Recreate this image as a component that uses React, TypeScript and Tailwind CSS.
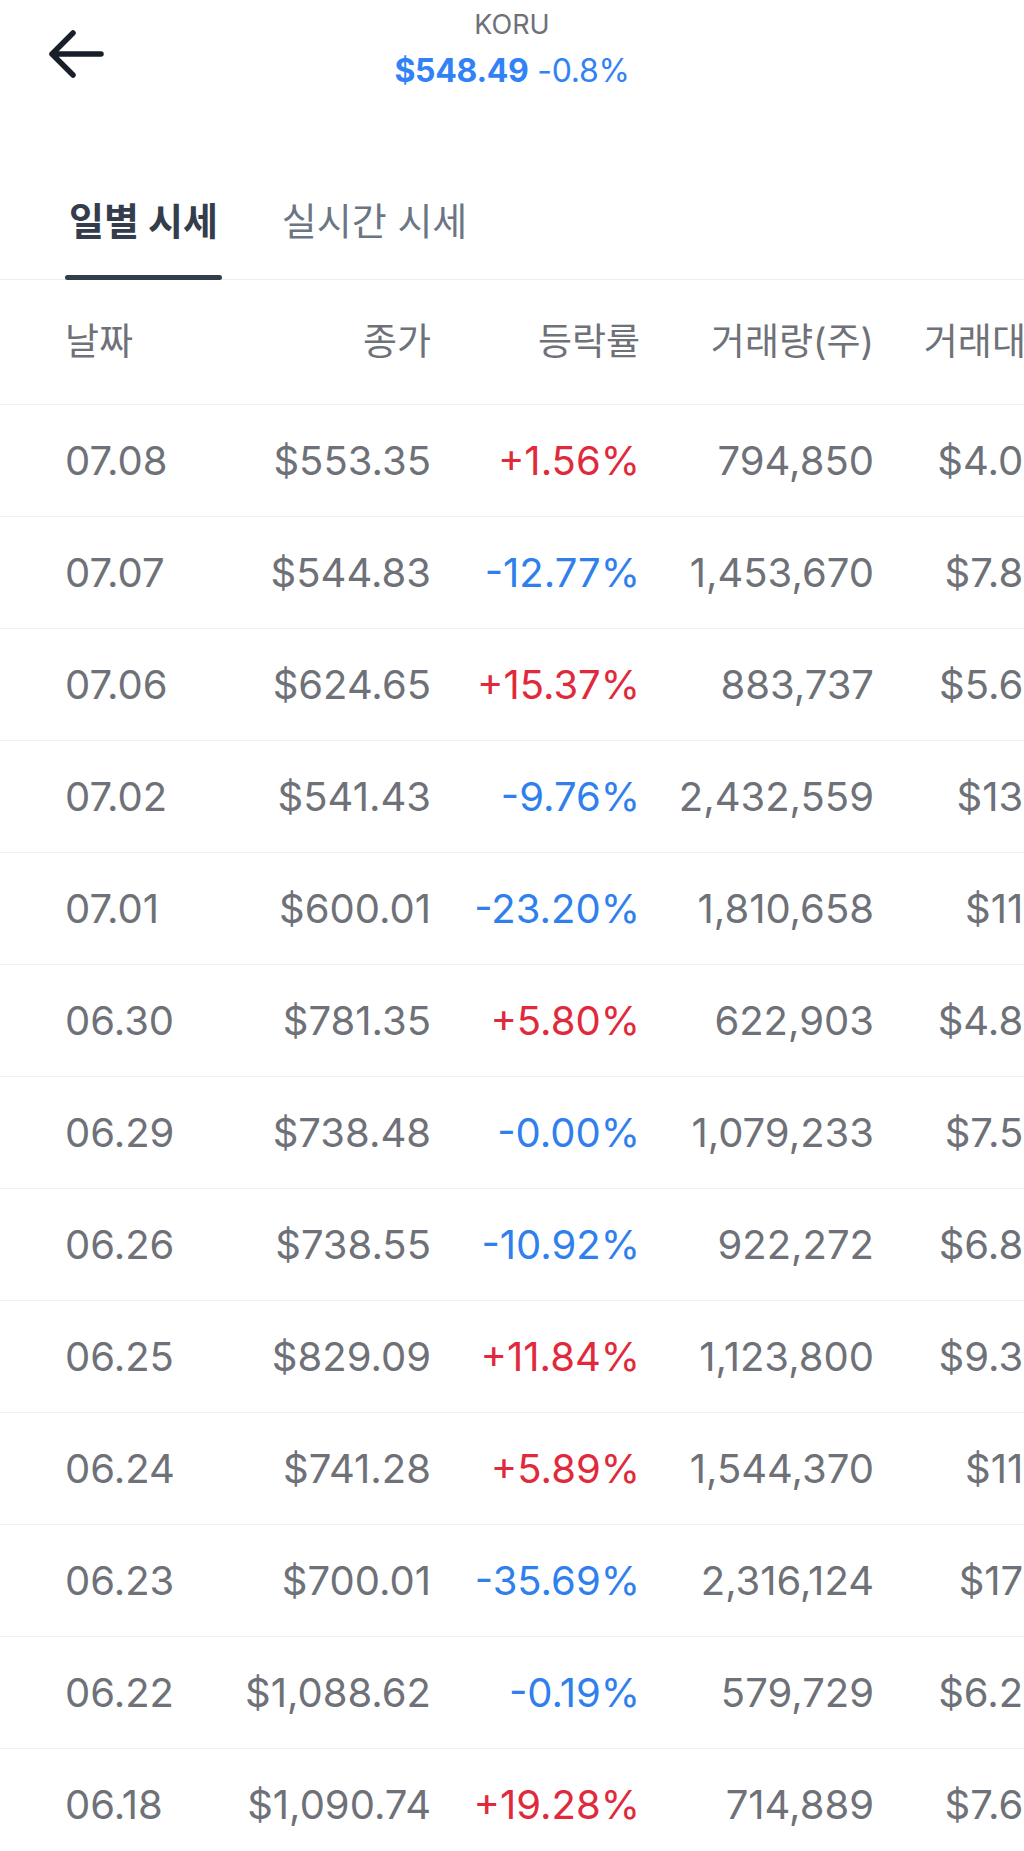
import { useState } from 'react';

type DailyPrice = {
  date: string;
  close: string;
  change: string;
  volume: string;
  amount: string;
};

const dailyPrices: DailyPrice[] = [
  { date: '07.08', close: '$553.35', change: '+1.56%', volume: '794,850', amount: '$4.0억' },
  { date: '07.07', close: '$544.83', change: '-12.77%', volume: '1,453,670', amount: '$7.8억' },
  { date: '07.06', close: '$624.65', change: '+15.37%', volume: '883,737', amount: '$5.6억' },
  { date: '07.02', close: '$541.43', change: '-9.76%', volume: '2,432,559', amount: '$13억' },
  { date: '07.01', close: '$600.01', change: '-23.20%', volume: '1,810,658', amount: '$11억' },
  { date: '06.30', close: '$781.35', change: '+5.80%', volume: '622,903', amount: '$4.8억' },
  { date: '06.29', close: '$738.48', change: '-0.00%', volume: '1,079,233', amount: '$7.5억' },
  { date: '06.26', close: '$738.55', change: '-10.92%', volume: '922,272', amount: '$6.8억' },
  { date: '06.25', close: '$829.09', change: '+11.84%', volume: '1,123,800', amount: '$9.3억' },
  { date: '06.24', close: '$741.28', change: '+5.89%', volume: '1,544,370', amount: '$11억' },
  { date: '06.23', close: '$700.01', change: '-35.69%', volume: '2,316,124', amount: '$17억' },
  { date: '06.22', close: '$1,088.62', change: '-0.19%', volume: '579,729', amount: '$6.2억' },
  { date: '06.18', close: '$1,090.74', change: '+19.28%', volume: '714,889', amount: '$7.6억' },
];

const tabs = ['일별 시세', '실시간 시세'];

// date | close | change | volume | amount (last column runs off the right edge)
const gridCols = 'grid grid-cols-[160px_206px_209px_234px_186px] w-[1060px] pl-[65px]';

const BackArrow = () => (
  <svg width="60" height="52" viewBox="0 0 60 52" fill="none" className="mt-[27px] ml-[46px]">
    <path
      d="M27 6 L6 27 L27 48 M6 27 H55"
      stroke="#191f28"
      strokeWidth="5.5"
      strokeLinecap="round"
      strokeLinejoin="round"
    />
  </svg>
);

const App = () => {
  const [activeTab, setActiveTab] = useState(0);

  return (
    <div
      className="w-[1024px] h-[1851px] overflow-hidden bg-white"
      style={{ fontFamily: 'Inter, "Noto Sans CJK KR", sans-serif' }}
    >
      {/* top bar */}
      <div className="grid grid-cols-[1fr_auto_1fr] h-[160px]">
        <div>
          <BackArrow />
        </div>
        <div className="flex flex-col items-center pt-[9px]">
          <p className="text-[27px] leading-[32px] text-[#6e7178]">KORU</p>
          <p className="mt-[10px] text-[32px] leading-[40px] text-[#3182f6] tracking-[-0.3px]">
            <span className="font-bold">$548.49</span> <span>-0.8%</span>
          </p>
        </div>
        <div />
      </div>

      {/* tabs */}
      <div className="flex gap-[56px] pl-[65px] h-[120px] border-b border-[#eceef1]">
        {tabs.map((tab, i) => (
          <button
            key={tab}
            onClick={() => setActiveTab(i)}
            className="flex flex-col pt-[38px] cursor-pointer"
          >
            <span
              className={
                i === activeTab
                  ? 'px-[4px] text-[38px] leading-[46px] font-bold text-[#333d4b]'
                  : 'px-[4px] text-[38px] leading-[46px] text-[#6b7684]'
              }
            >
              {tab}
            </span>
            <span
              className={
                i === activeTab
                  ? 'mt-auto mb-[-1px] h-[5px] w-full rounded-full bg-[#333d4b]'
                  : 'mt-auto mb-[-1px] h-[5px] w-full'
              }
            />
          </button>
        ))}
      </div>

      {/* table */}
      <div className="w-[1024px] overflow-hidden">
        <div className={`${gridCols} h-[125px] items-center border-b border-[#f0f1f3] text-[37px] text-[#6e7178]`}>
          <span>날짜</span>
          <span className="text-right">종가</span>
          <span className="text-right">등락률</span>
          <span className="text-right">거래량(주)</span>
          <span className="text-right whitespace-nowrap">거래대금</span>
        </div>

        {dailyPrices.map((row) => (
          <div
            key={row.date}
            className={`${gridCols} h-[112px] items-center border-b border-[#f0f1f3] text-[40px] text-[#6e7178] whitespace-nowrap`}
          >
            <span>{row.date}</span>
            <span className="text-right">{row.close}</span>
            <span className={row.change.startsWith('+') ? 'text-right text-[#e02a3c]' : 'text-right text-[#2f80ed]'}>
              {row.change}
            </span>
            <span className="text-right">{row.volume}</span>
            <span className="text-right">{row.amount}</span>
          </div>
        ))}
      </div>
    </div>
  );
};

export default App;
